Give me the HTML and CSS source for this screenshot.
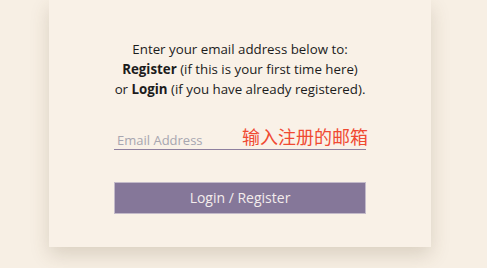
FILE: index.html
```html
<!DOCTYPE html>
<html lang="en">
<head>
<meta charset="utf-8">
<title>Login / Register</title>
<link rel="stylesheet" href="styles.css">
</head>
<body>
<div class="card">
  <p class="intro">Enter your email address below to:<br><b>Register</b> (if this is your first time here)<br>or <b>Login</b> (if you have already registered).</p>
  <div class="field">
    <input class="email" type="email" placeholder="Email Address">
    <span class="note">输入注册的邮箱</span>
  </div>
  <button class="submit" type="button">Login / Register</button>
</div>
</body>
</html>
```
FILE: styles.css
```css
html, body {
  margin: 0;
  padding: 0;
  background: #f7efe4;
  height: 100%;
  overflow: hidden;
}
body {
  font-family: "Open Sans", "Noto Sans", sans-serif;
  color: #1c1c1c;
}
.card {
  box-sizing: border-box;
  width: 382px;
  margin-left: 49px;
  padding: 39px 65px 33px;
  background: #f9f1e7;
  box-shadow: 0 8px 18px rgba(90, 70, 40, 0.18);
}
.intro {
  margin: 0;
  font-size: 13.3px;
  line-height: 20px;
  text-align: center;
}
.intro b {
  font-weight: 700;
}
.field {
  position: relative;
  margin-top: 22px;
}
.email {
  display: block;
  box-sizing: border-box;
  width: 100%;
  margin: 0;
  padding: 10px 3px 0;
  border: 0;
  border-bottom: 1px solid #8e809f;
  background: transparent;
  font-family: "Open Sans", "Noto Sans", sans-serif;
  font-size: 13px;
  line-height: 18px;
  height: 29px;
  color: #333;
  outline: none;
}
.email::placeholder {
  color: #a7a6b0;
}
.note {
  position: absolute;
  left: 128px;
  top: 4px;
  white-space: nowrap;
  font-family: "Noto Sans CJK SC", sans-serif;
  font-size: 18px;
  line-height: 22px;
  color: #f04a32;
  pointer-events: none;
}
.submit {
  display: block;
  box-sizing: border-box;
  width: 100%;
  height: 32px;
  margin: 32px 0 0;
  padding: 0;
  border: 1px solid #c3bac9;
  background: #857799;
  color: #f3ecec;
  font-family: "Open Sans", "Noto Sans", sans-serif;
  font-size: 14px;
  line-height: 30px;
  text-align: center;
}
```
